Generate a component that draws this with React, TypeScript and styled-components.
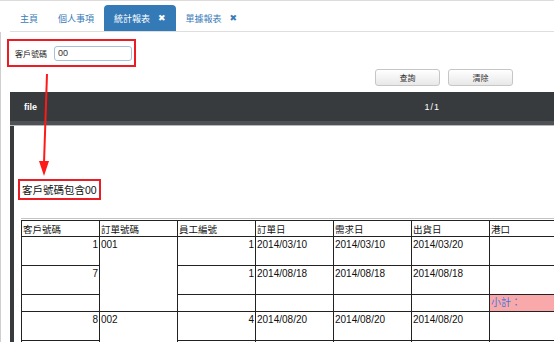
import styled, { createGlobalStyle } from 'styled-components'

const GlobalStyle = createGlobalStyle`
  html, body {
    margin: 0;
    padding: 0;
    background: #fff;
  }
  body {
    font-family: "Liberation Sans", "Noto Sans CJK TC", sans-serif;
  }
`

const Page = styled.div`
  position: relative;
  width: 554px;
  height: 342px;
  overflow: hidden;
  box-sizing: border-box;
  border-top: 1px solid #dcdcdc;
  background: #fff;
`

const TabBar = styled.nav`
  display: flex;
  align-items: flex-end;
  height: 30px;
  margin-left: 10px;
  border-bottom: 1px solid #dedede;
`

const Tab = styled.div<{ $active?: boolean }>`
  display: flex;
  align-items: center;
  gap: 8px;
  height: 26px;
  padding: 0 10px;
  border-radius: 4px 4px 0 0;
  font-family: "Noto Sans CJK TC", sans-serif;
  font-size: 9px;
  color: ${({ $active }) => ($active ? '#fff' : '#3a7bb8')};
  background: ${({ $active }) => ($active ? '#337ab7' : 'transparent')};
`

const Close = styled.span`
  font-family: "DejaVu Sans", sans-serif;
  font-size: 9px;
  font-weight: bold;
`

const Main = styled.div`
  display: flex;
  flex-direction: column;
  align-items: flex-start;
  border-left: 1px solid #cfcfcf;
  height: 310px;
  overflow: hidden;
`

const FilterBox = styled.div`
  flex-shrink: 0;
  display: flex;
  align-items: center;
  gap: 7px;
  height: 28px;
  box-sizing: border-box;
  margin: 7px 0 0 6px;
  padding: 0 2px 0 6px;
  border: 2px solid #ec1c24;
`

const FilterLabel = styled.label`
  font-family: "Noto Sans CJK TC", sans-serif;
  font-size: 8px;
  color: #222;
`

const FilterInput = styled.input`
  width: 78px;
  height: 15px;
  box-sizing: border-box;
  padding: 0 3px;
  border: 1px solid #a8c0dc;
  border-radius: 3px;
  font-family: "Liberation Sans", sans-serif;
  font-size: 9px;
  color: #333;
  outline: none;
`

const ButtonRow = styled.div`
  flex-shrink: 0;
  display: flex;
  justify-content: flex-end;
  gap: 8px;
  align-self: stretch;
  margin-top: 2px;
  padding-right: 41px;
`

const Button = styled.button`
  width: 65px;
  height: 17px;
  padding: 0;
  border: 1px solid #c6c6c6;
  border-radius: 3px;
  background: linear-gradient(#ffffff, #e8e8e8);
  font-family: "Noto Sans CJK TC", sans-serif;
  font-size: 8px;
  color: #333;
`

const Viewer = styled.section`
  flex: 1;
  min-height: 0;
  align-self: stretch;
  display: flex;
  flex-direction: column;
  margin: 6px 0 0 9px;
  background: #383b3e;
`

const Toolbar = styled.div`
  flex-shrink: 0;
  display: flex;
  align-items: center;
  height: 29px;
  padding-left: 14px;
  font-family: "Liberation Sans", sans-serif;
  font-size: 9px;
  color: #fff;
`

const FileLabel = styled.span`
  font-weight: bold;
`

const Pager = styled.span`
  margin-left: auto;
  margin-right: 114px;
  letter-spacing: 1px;
`

const ToolbarBand = styled.div`
  flex-shrink: 0;
  height: 4px;
  background: #4e5256;
  border-bottom: 1px solid #b8b8b8;
`

const Sheet = styled.div`
  flex: 1;
  min-height: 0;
  margin-left: 4px;
  background: #fff;
  padding: 53px 0 0 4px;
`

const ReportTitle = styled.div`
  width: fit-content;
  height: 21px;
  box-sizing: border-box;
  display: flex;
  align-items: center;
  padding: 0 2px;
  border: 2px solid #ec1c24;
  font-family: "Liberation Sans", "Noto Sans CJK TC", sans-serif;
  font-size: 10.5px;
  color: #111;
`

const TableWrap = styled.div`
  margin: 18px 0 0 3px;
  padding-top: 1px;
  border-top: 1px solid #c4c4c4;
`

const Table = styled.table`
  border-collapse: collapse;
  table-layout: fixed;
  width: 546px;
  font-family: "Liberation Sans", "Noto Sans CJK TC", sans-serif;
  font-size: 10px;
  color: #111;
`

const Head = styled.th`
  height: 15px;
  padding: 0 1px;
  border: 1px solid #222;
  text-align: left;
  font-weight: normal;
  font-size: 9.5px;
`

const Cell = styled.td<{ $num?: boolean; $short?: boolean; $subtotal?: boolean }>`
  height: ${({ $short }) => ($short ? '15px' : '27px')};
  padding: 1px 1px 0;
  border: 1px solid #222;
  vertical-align: top;
  line-height: 13px;
  text-align: ${({ $num }) => ($num ? 'right' : 'left')};
  background: ${({ $subtotal }) => ($subtotal ? '#f9a9a9' : 'transparent')};
  color: ${({ $subtotal }) => ($subtotal ? '#3f78e0' : '#111')};
`

const Arrow = styled.svg`
  position: absolute;
  left: 36px;
  top: 70px;
  width: 16px;
  height: 110px;
`

const columns = ['客戶號碼', '訂單號碼', '員工編號', '訂單日', '需求日', '出貨日', '港口']

export default function App() {
  return (
    <>
      <GlobalStyle />
      <Page>
        <TabBar>
          <Tab>主頁</Tab>
          <Tab>個人事項</Tab>
          <Tab $active>
            統計報表<Close>✖</Close>
          </Tab>
          <Tab>
            單據報表<Close>✖</Close>
          </Tab>
        </TabBar>
        <Main>
          <FilterBox>
            <FilterLabel htmlFor="cust">客戶號碼</FilterLabel>
            <FilterInput id="cust" defaultValue="00" />
          </FilterBox>
          <ButtonRow>
            <Button>查詢</Button>
            <Button>清除</Button>
          </ButtonRow>
          <Viewer>
            <Toolbar>
              <FileLabel>file</FileLabel>
              <Pager>1/1</Pager>
            </Toolbar>
            <ToolbarBand />
            <Sheet>
              <ReportTitle>客戶號碼包含00</ReportTitle>
              <TableWrap>
                <Table>
                  <colgroup>
                    {columns.map((c) => (
                      <col key={c} style={{ width: 78 }} />
                    ))}
                  </colgroup>
                  <thead>
                    <tr>
                      {columns.map((c) => (
                        <Head key={c}>{c}</Head>
                      ))}
                    </tr>
                  </thead>
                  <tbody>
                    <tr>
                      <Cell $num>1</Cell>
                      <Cell rowSpan={3}>001</Cell>
                      <Cell $num>1</Cell>
                      <Cell>2014/03/10</Cell>
                      <Cell>2014/03/10</Cell>
                      <Cell>2014/03/20</Cell>
                      <Cell />
                    </tr>
                    <tr>
                      <Cell $num>7</Cell>
                      <Cell $num>1</Cell>
                      <Cell>2014/08/18</Cell>
                      <Cell>2014/08/18</Cell>
                      <Cell>2014/08/18</Cell>
                      <Cell />
                    </tr>
                    <tr>
                      <Cell $short />
                      <Cell $short />
                      <Cell $short />
                      <Cell $short />
                      <Cell $short />
                      <Cell $short $subtotal>小計：</Cell>
                    </tr>
                    <tr>
                      <Cell $num>8</Cell>
                      <Cell rowSpan={2}>002</Cell>
                      <Cell $num>4</Cell>
                      <Cell>2014/08/20</Cell>
                      <Cell>2014/08/20</Cell>
                      <Cell>2014/08/20</Cell>
                      <Cell />
                    </tr>
                    <tr>
                      <Cell $num>3</Cell>
                      <Cell $num>4</Cell>
                      <Cell>2014/04/09</Cell>
                      <Cell>2014/04/09</Cell>
                      <Cell>2014/04/09</Cell>
                      <Cell />
                    </tr>
                  </tbody>
                </Table>
              </TableWrap>
            </Sheet>
          </Viewer>
        </Main>
        <Arrow viewBox="0 0 16 110">
          <line x1="11" y1="3" x2="8" y2="92" stroke="#ff1a1a" strokeWidth="2" />
          <polygon points="3,90 13,90 8,105" fill="#ff1a1a" />
        </Arrow>
      </Page>
    </>
  )
}
